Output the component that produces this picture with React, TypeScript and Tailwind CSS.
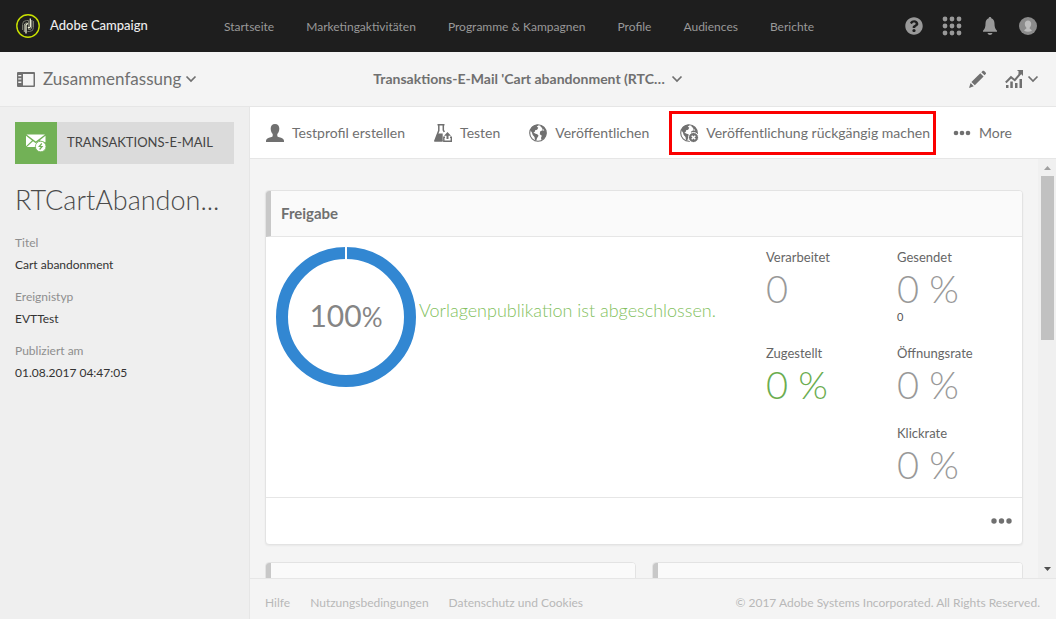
import React from "react";
import { FaQuestionCircle, FaGlobeAmericas } from "react-icons/fa";

const Chevron = () => (
  <svg width="12" height="8" viewBox="0 0 12 8" fill="none" stroke="currentColor" strokeWidth="1.7" aria-hidden="true">
    <path d="M1.5 1.5 6 6l4.500-4.500" />
  </svg>
);

const Logo = () => (
  <svg width="24" height="24" viewBox="0 0 24 24" fill="none" aria-hidden="true">
    <circle cx="12" cy="12" r="11.200" stroke="#c8e000" strokeWidth="1.400" />
    <g strokeWidth="1">
      <path d="M6.500 16V10.500A4 4 0 0 1 10.500 6.500H12.500V14.500" stroke="#77796c" />
      <path d="M8.300 18V11A2.300 2.300 0 0 1 12 9.500" stroke="#a9ab9a" />
      <path d="M17.500 7V13.500A4 4 0 0 1 13.500 17.500H11.500" stroke="#77796c" />
      <path d="M15.800 6V13A2.300 2.300 0 0 1 12 14.800" stroke="#a9ab9a" />
      <path d="M10 19.500V11.500A1.500 1.500 0 0 1 12 10" stroke="#f2f3d8" strokeWidth="1.300" />
      <path d="M14.300 4.500V12.800A1.500 1.500 0 0 1 12 13.200" stroke="#f2f3d8" strokeWidth="1.300" />
    </g>
  </svg>
);

const PanelIcon = () => (
  <svg width="18" height="15" viewBox="0 0 18 15" aria-hidden="true">
    <path fill="currentColor" fillRule="evenodd" d="M1 0h16a1 1 0 0 1 1 1v13a1 1 0 0 1-1 1H1a1 1 0 0 1-1-1V1a1 1 0 0 1 1-1Zm5 2v11.500h10.500V2ZM1.300 3v1.300h3V3Zm0 3.300v1.300h3V6.300Zm0 3.300v1.300h3V9.600Z" />
  </svg>
);

const GridIcon = () => (
  <svg width="20" height="20" viewBox="0 0 20 20" fill="currentColor" aria-hidden="true">
    {[3, 10, 17].map((y) => [3, 10, 17].map((x) => <circle key={x + "-" + y} cx={x} cy={y} r="2.400" />))}
  </svg>
);

const BellIcon = () => (
  <svg width="16" height="20" viewBox="0 0 16 20" fill="currentColor" aria-hidden="true">
    <path d="M8 1c.8 0 1.300.5 1.300 1.300 2.200.7 3.200 2.600 3.200 5.200 0 3.500.6 5.500 2.500 7.200v1H1v-1c1.900-1.700 2.500-3.700 2.500-7.200 0-2.600 1-4.500 3.200-5.200C6.700 1.500 7.200 1 8 1ZM5.500 17h5c-.3 1.200-1.300 2-2.500 2s-2.200-.8-2.500-2Z" />
  </svg>
);

const AvatarIcon = () => (
  <svg width="18" height="18" viewBox="0 0 18 18" aria-hidden="true">
    <circle cx="9" cy="9" r="9" fill="#8c8c8c" />
    <path fill="#bdbdbd" d="M9 3.500c2 0 3.200 1.300 3.200 3.300 0 1.600-.6 2.900-1.500 3.700v1.300c1 .5 1.700.9 2.200 2a8.500 8.500 0 0 1-7.800 0c.5-1.100 1.200-1.500 2.200-2v-1.300c-.9-.8-1.500-2.100-1.500-3.700 0-2 1.200-3.300 3.200-3.300Z" />
  </svg>
);

const PencilIcon = () => (
  <svg width="18" height="18" viewBox="0 0 18 18" fill="currentColor" aria-hidden="true">
    <path d="M13.800.8c.8-.8 3.800 2 3.200 3l-1.500 1.500-3.200-3ZM11.300 3.300l3.300 3.200-8.800 8.800-3.400-3.300ZM1.600 13l3.200 3.200L0 18Z" />
  </svg>
);

const ChartIcon = () => (
  <svg width="18" height="18" viewBox="0 0 18 18" aria-hidden="true">
    <path fill="currentColor" d="M1 15h2.500v3H1ZM5.300 11.500h2.500V18H5.300ZM10 13h2.500v5H10ZM14.500 9H17v9h-2.500ZM12 0h6v6l-2.200-2.200-1 1-1.800-1.800 1-1Z" />
    <path d="M.8 12.500 6 7.200l3.800 3L15.800 3" fill="none" stroke="currentColor" strokeWidth="2" />
  </svg>
);

const ProfileIcon = () => (
  <svg width="18" height="18" viewBox="0 0 18 18" fill="currentColor" aria-hidden="true">
    <path d="M9 0c2.800 0 4.300 1.800 4.300 4.600 0 2.300-.8 4.300-2 5.500v1.600c0 1 .6 1.200 2 1.600 2.500.8 4.700 1.300 4.700 3.500V18H0v-1.200c0-2.200 2.200-2.700 4.700-3.500 1.400-.4 2-.6 2-1.600v-1.600c-1.200-1.200-2-3.200-2-5.500C4.700 1.800 6.200 0 9 0Z" />
  </svg>
);

const FlaskIcon = () => (
  <svg width="18" height="18" viewBox="0 0 18 18" aria-hidden="true">
    <path d="M3.500.8h7M4.800 1v5.500L.9 16.800h7.600M9.300 1v5l1 2" fill="none" stroke="currentColor" strokeWidth="1.500" />
    <path d="M3.500 9.500h5.200V17.500H.6Z" fill="currentColor" />
    <path d="M13.500 8 17 11.800h-2.500V15h-2v-3.200H10Z" fill="currentColor" />
    <path d="M11 13.200H9.800v4h7.500v-4H16" fill="none" stroke="currentColor" strokeWidth="1.400" />
  </svg>
);

const Globe = () => (
  <svg width="18" height="18" viewBox="0 0 18 18" aria-hidden="true">
    <circle cx="9" cy="9" r="8.300" fill="#fff" stroke="currentColor" strokeWidth="1.100" />
    <path fill="currentColor" d="M1.200 6C2.500 2.800 5 .8 8.500.6l1 1-1.800.9 1.600 1.300-1.200 1.900-2 .6-.4 1.700-1.300.3 1.600 1.200 2.300.7 1.300 1.500-1.500 2.200-.9 2.900-1.200-.3-.5-3.500-1.800-1.900L2.900 8.500Z" />
    <path fill="currentColor" d="M11.200 1c2.800.8 4.800 2.500 5.600 5.200l.5 3.300c-.2 2.500-1.300 4.600-3.300 6l-1.500.6-.5-2.100.8-2.200-2-1.600.3-2.600 2.300-1.300 1.800.4-.3-1.300-2 .1.500-1.600-1.600-.8Z" />
  </svg>
);

const UnpublishIcon = () => (
  <span className="relative block size-[18px]">
    <Globe />
    <svg className="absolute -right-px -bottom-px" width="11" height="11" viewBox="0 0 11 11" aria-hidden="true">
      <circle cx="5.500" cy="5.500" r="5" fill="currentColor" stroke="#fff" />
      <path d="m3.700 3.700 3.600 3.600m0-3.600L3.700 7.300" stroke="#fff" strokeWidth="1.400" />
    </svg>
  </span>
);

const Dots = ({ size }: { size: number }) => (
  <svg width={size} height="6" viewBox={`0 0 ${size} 6`} fill="currentColor" aria-hidden="true">
    <circle cx="3" cy="3" r={size > 18 ? 2.7 : 2.3} />
    <circle cx={size / 2} cy="3" r={size > 18 ? 2.7 : 2.3} />
    <circle cx={size - 3} cy="3" r={size > 18 ? 2.7 : 2.3} />
  </svg>
);

const MailIcon = () => (
  <svg width="20" height="18" viewBox="0 0 20 18" aria-hidden="true">
    <path fill="#fff" d="M.5.500h18.500L9.800 7.500ZM0 1.800l6 4.700-6 5.700ZM19.500 1.800v6.500l-6-1.800ZM7 7.300l2.800 2 2.700-2 2 1.200c-2.800.2-4.500 2-5 4.500H.8Z" />
    <circle cx="14.700" cy="12.500" r="5.300" fill="#fff" stroke="#72b156" strokeWidth=".8" />
    <path d="m15.800 9.500-2.500 3h2.800l-2.500 3" fill="none" stroke="#72b156" strokeWidth="1.200" />
  </svg>
);

const nav = ["Startseite", "Marketingaktivitäten", "Programme & Kampagnen", "Profile", "Audiences", "Berichte"];

const details = [
  ["Titel", "Cart abandonment"],
  ["Ereignistyp", "EVTTest"],
  ["Publiziert am", "01.08.2017 04:47:05"],
];

function Tool({ icon, label }: { icon: React.ReactNode; label: string }) {
  return (
    <button type="button" className="flex shrink-0 items-center gap-2 whitespace-nowrap">
      {icon}
      {label}
    </button>
  );
}

function Stat({ label, value, note, good }: { label: string; value: string; note?: string; good?: boolean }) {
  return (
    <div>
      <dt className="text-[13px] leading-5 text-[#666]">{label}</dt>
      <dd className={good ? "text-[38px] leading-[42px] font-light text-[#6bad50]" : "text-[38px] leading-[42px] font-light text-[#999]"}>{value}</dd>
      {note && <dd className="text-[11px] leading-4 text-[#555]">{note}</dd>}
    </div>
  );
}

export default function App() {
  return (
    <div className="flex h-screen flex-col overflow-hidden bg-[#f4f4f4] font-['Lato',sans-serif] text-[#707070]">
      <header className="flex h-[52px] shrink-0 items-center bg-[#1e1e1e] px-4 text-[#999]">
        <a href="#home" className="flex w-52 shrink-0 items-center gap-[10px] text-[13px] font-medium text-[#eee]">
          <Logo />
          Adobe Campaign
        </a>
        <nav className="flex gap-8 pt-px text-xs whitespace-nowrap">
          {nav.map((item) => (
            <a key={item} href="#nav">{item}</a>
          ))}
        </nav>
        <div className="ml-auto flex items-center gap-5 pr-[3px]">
          <button type="button" aria-label="Hilfe"><FaQuestionCircle size={18} /></button>
          <button type="button" aria-label="Lösungen" className="-mx-px"><GridIcon /></button>
          <button type="button" aria-label="Benachrichtigungen" className="mx-px"><BellIcon /></button>
          <button type="button" aria-label="Benutzerprofil"><AvatarIcon /></button>
        </div>
      </header>

      <div className="flex h-[55px] shrink-0 items-center border-b border-[#e6e6e6] px-[17px]">
        <div className="flex flex-1">
          <button type="button" className="flex items-center gap-2 text-[17px]">
            <PanelIcon />
            <span className="flex items-center gap-1">Zusammenfassung <Chevron /></span>
          </button>
        </div>
        <button type="button" className="flex items-center gap-[6px] text-sm font-bold">
          Transaktions-E-Mail 'Cart abandonment (RTC… <Chevron />
        </button>
        <div className="flex flex-1 items-center justify-end gap-[18px]">
          <button type="button" aria-label="Bearbeiten"><PencilIcon /></button>
          <button type="button" aria-label="Berichte" className="flex items-center gap-1"><ChartIcon /><Chevron /></button>
        </div>
      </div>

      <div className="flex min-h-0 flex-1">
        <aside className="w-[250px] shrink-0 border-r border-[#e6e6e6] bg-[#efefef] px-[15px] pt-[15px]">
          <div className="flex h-[42px] items-center bg-[#dbdbdb] text-[13px] text-[#444]">
            <span className="flex size-[42px] items-center justify-center bg-[#72b156]"><MailIcon /></span>
            <span className="pl-[10px]">TRANSAKTIONS-E-MAIL</span>
          </div>
          <h1 className="mt-4 truncate text-[27px] leading-10 font-light text-[#4b4b4b]">RTCartAbandon...</h1>
          <dl className="mt-3 flex flex-col gap-[10px] text-xs leading-[22px]">
            {details.map(([label, value]) => (
              <div key={label}>
                <dt className="text-[#8e8e8e]">{label}</dt>
                <dd className="text-[#333]">{value}</dd>
              </div>
            ))}
          </dl>
        </aside>

        <main className="flex min-w-0 flex-1 flex-col">
          <div className="flex h-[52px] shrink-0 items-center border-b border-[#e6e6e6] bg-white pl-4 text-sm">
            <div className="flex items-center gap-[29px]">
              <Tool icon={<ProfileIcon />} label="Testprofil erstellen" />
              <Tool icon={<FlaskIcon />} label="Testen" />
              <Tool icon={<Globe />} label="Veröffentlichen" />
            </div>
            <div className="mr-[17px] ml-5 flex h-11 items-center border-3 border-[#fb0000] pr-[3px] pl-2">
              <Tool icon={<UnpublishIcon />} label="Veröffentlichung rückgängig machen" />
            </div>
            <Tool icon={<Dots size={18} />} label="More" />
          </div>

          <div className="flex min-h-0 flex-1">
            <div className="min-w-0 flex-1 overflow-hidden pt-[31px] pr-[15px] pl-[15px]">
              <section className="overflow-hidden rounded border border-[#e3e3e3] bg-white shadow-xs">
                <h2 className="flex h-[46px] items-center border-b border-l-5 border-b-[#e6e6e6] border-l-[#c8c8c8] bg-[#fafafa] pl-[10px] text-[15px] font-bold">Freigabe</h2>
                <div className="flex h-[260px] items-start pt-[10px] pl-[10px]">
                  <div className="grid size-[140px] shrink-0 place-items-center">
                    <svg className="col-start-1 row-start-1" width="140" height="140" viewBox="0 0 140 140" aria-hidden="true">
                      <circle cx="70" cy="70" r="64" fill="none" stroke="#3287d2" strokeWidth="12" />
                      <path d="M70 0v13" stroke="#fff" strokeWidth="2" />
                    </svg>
                    <span className="col-start-1 row-start-1 pb-1 text-3xl text-[#858585]">100<span className="text-[26px]">%</span></span>
                  </div>
                  <p className="mt-[50px] ml-[3px] flex-1 text-lg leading-[26px] font-light text-[#83bf60]">Vorlagenpublikation ist abgeschlossen.</p>
                  <dl className="grid w-[256px] shrink-0 grid-cols-[131px_1fr] grid-rows-[96px_80px_80px]">
                    <Stat label="Verarbeitet" value="0" />
                    <Stat label="Gesendet" value="0 %" note="0" />
                    <Stat label="Zugestellt" value="0 %" good />
                    <Stat label="Öffnungsrate" value="0 %" />
                    <div className="col-start-2">
                      <Stat label="Klickrate" value="0 %" />
                    </div>
                  </dl>
                </div>
                <div className="flex h-[47px] items-center justify-end border-t border-[#e6e6e6] pr-[10px]">
                  <button type="button" aria-label="Weitere Optionen"><Dots size={21} /></button>
                </div>
              </section>
              <div className="mt-[17px] grid grid-cols-2 gap-4">
                {[0, 1].map((n) => (
                  <section key={n} className="h-40 overflow-hidden rounded border border-[#e3e3e3] bg-white">
                    <div className="h-[46px] border-b border-l-5 border-b-[#e6e6e6] border-l-[#c8c8c8] bg-[#fafafa]" />
                  </section>
                ))}
              </div>
            </div>
            <div className="flex w-[18px] shrink-0 flex-col items-center bg-[#f0f0f0]" aria-hidden="true">
              <svg className="shrink-0" width="17" height="17" viewBox="0 0 17 17"><path d="M5 11h7L8.500 7Z" fill="#a0a0a0" /></svg>
              <div className="h-[164px] w-[13px] bg-[#c1c1c1]" />
              <svg className="mt-auto shrink-0" width="17" height="17" viewBox="0 0 17 17"><path d="M5 6h7l-3.500 4Z" fill="#505050" /></svg>
            </div>
          </div>

          <footer className="flex h-[41px] shrink-0 items-center gap-5 border-t border-[#e6e6e6] pt-[7px] pr-4 pl-[15px] text-xs whitespace-nowrap text-[#b8b8b8]">
            <a href="#hilfe">Hilfe</a>
            <a href="#nutzung">Nutzungsbedingungen</a>
            <a href="#datenschutz">Datenschutz und Cookies</a>
            <span className="ml-auto">© 2017 Adobe Systems Incorporated. All Rights Reserved.</span>
          </footer>
        </main>
      </div>
    </div>
  );
}
